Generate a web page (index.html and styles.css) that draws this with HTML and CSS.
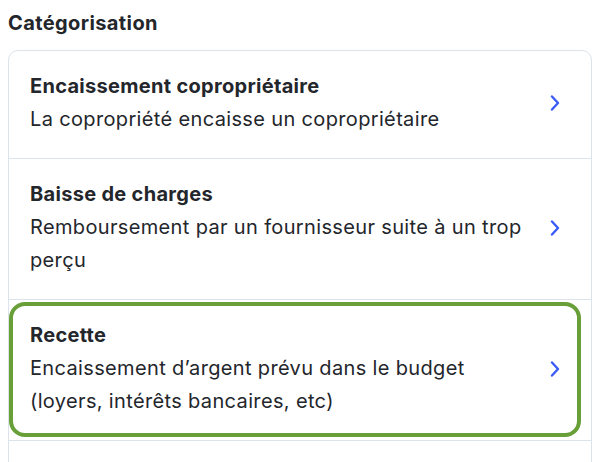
FILE: index.html
```html
<!DOCTYPE html>
<html lang="fr">
<head>
    <meta charset="UTF-8">
    <meta name="viewport" content="width=device-width, initial-scale=1.0">
    <title>Catégorisation</title>
    <link rel="stylesheet" href="styles.css">
</head>
<body>

    <div class="section">
        <h3 class="section-title">Catégorisation</h3>

        <div class="list">
            <div class="list-item">
                <div class="item-text">
                    <strong>Encaissement copropriétaire</strong>
                    <span>La copropriété encaisse un copropriétaire</span>
                </div>
                <svg class="chevron" width="10" height="16" viewBox="0 0 10 16"><path d="M2 1.5 L8 8 L2 14.5" fill="none" stroke="currentColor" stroke-width="2.4" stroke-linecap="round" stroke-linejoin="round"/></svg>
            </div>
            <div class="list-item">
                <div class="item-text">
                    <strong>Baisse de charges</strong>
                    <span>Remboursement par un fournisseur suite à un trop perçu</span>
                </div>
                <svg class="chevron" width="10" height="16" viewBox="0 0 10 16"><path d="M2 1.5 L8 8 L2 14.5" fill="none" stroke="currentColor" stroke-width="2.4" stroke-linecap="round" stroke-linejoin="round"/></svg>
            </div>
            <div class="list-item focused">
                <div class="item-text">
                    <strong>Recette</strong>
                    <span>Encaissement d’argent prévu dans le budget (loyers, intérêts bancaires, etc)</span>
                </div>
                <svg class="chevron" width="10" height="16" viewBox="0 0 10 16"><path d="M2 1.5 L8 8 L2 14.5" fill="none" stroke="currentColor" stroke-width="2.4" stroke-linecap="round" stroke-linejoin="round"/></svg>
            </div>
            <div class="list-item empty"></div>
        </div>
    </div>

</body>
</html>
```

FILE: styles.css
```css
body {
    margin: 0;
    padding: 0 20px 0 8px;
    font-family: Inter, "Noto Sans", sans-serif;
    color: #23262b;
    background: #fff;
}
.section-title {
    margin: 10px 0 0;
    font-size: 20px;
    line-height: 26px;
    font-weight: 700;
    letter-spacing: 0.4px;
}
.list {
    margin-top: 14px;
    border: 1px solid #dde3ea;
    border-radius: 10px;
}
.list-item {
    position: relative;
    display: flex;
    align-items: center;
    justify-content: space-between;
    padding: 19px 31px 22px 21px;
    border-bottom: 1px solid #dde3ea;
}
.list-item.empty {
    height: 60px;
    border-bottom: none;
}
.item-text {
    display: flex;
    flex-direction: column;
    max-width: 500px;
    font-size: 20px;
    line-height: 33px;
    letter-spacing: 0.35px;
}
.item-text strong {
    font-weight: 700;
    letter-spacing: 0.3px;
}
.chevron {
    flex-shrink: 0;
    color: #3c5cf6;
}
.focused::after {
    content: "";
    position: absolute;
    top: 2px;
    left: 0;
    right: 10px;
    bottom: 3px;
    border: 4px solid #689f38;
    border-radius: 16px;
}
```
